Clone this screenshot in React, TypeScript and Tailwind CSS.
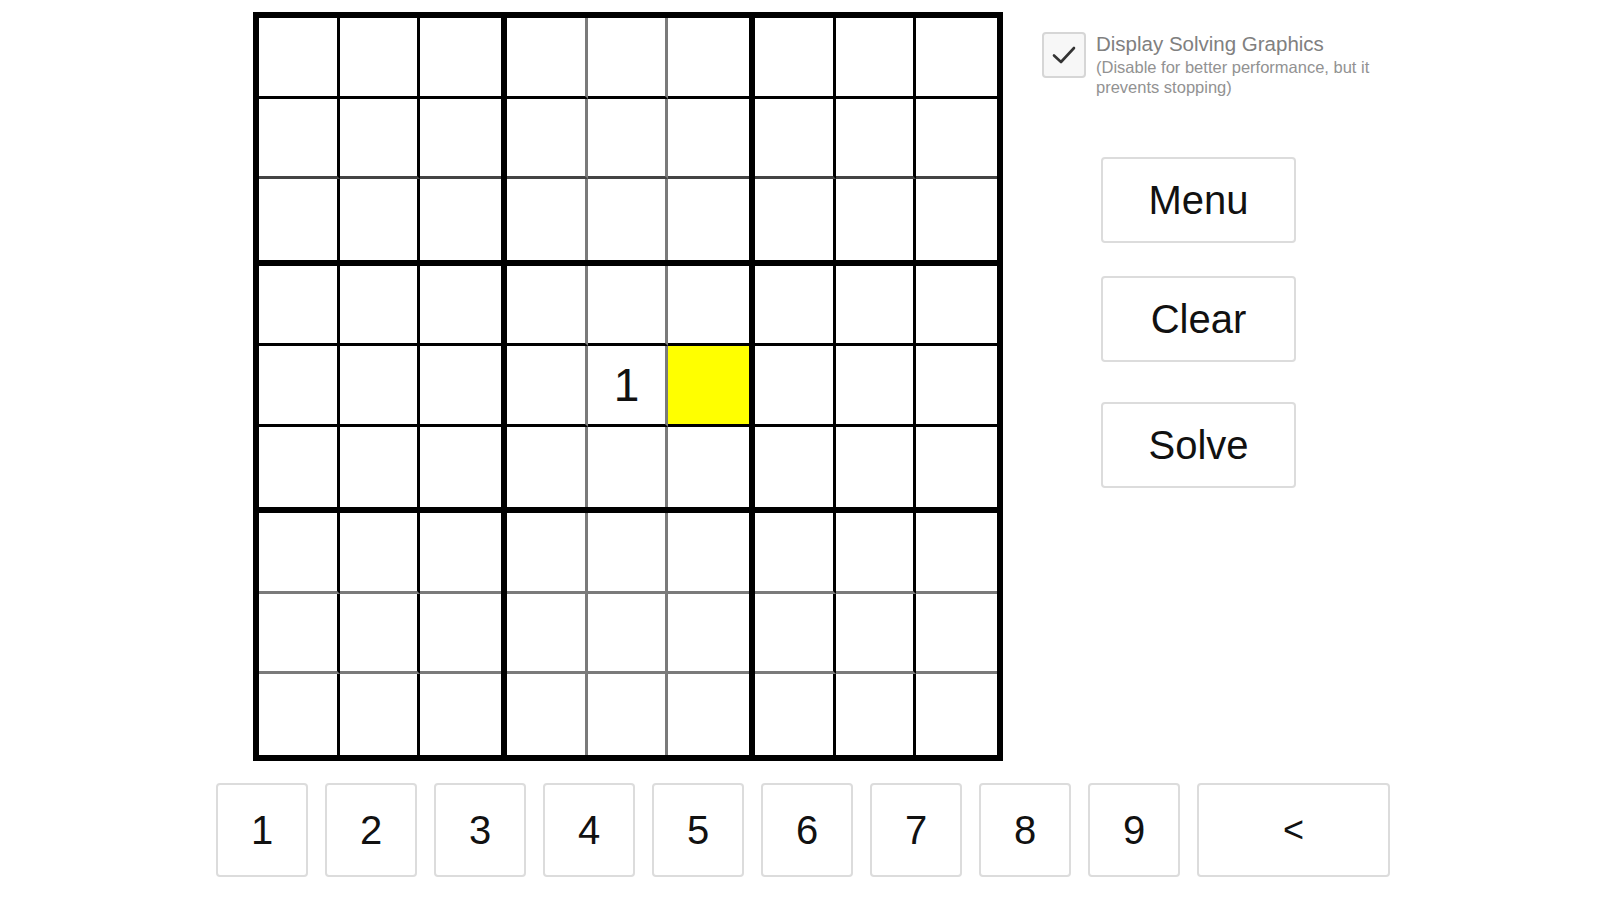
import React from "react";

const FONT = "font-['Liberation_Sans',Arial,sans-serif]";

// cell values: row, col -> text
const values: Record<string, string> = { "4-4": "1" };
const selected = "4-5";

function vLine(col: number) {
  if (col % 3 === 2) return "";
  if (col === 3 || col === 4) return "border-r-[3px] border-r-[#7a7a7a]";
  return "border-r-[3px] border-r-black";
}

function hLine(row: number) {
  if (row % 3 === 2) return "";
  if (row === 6 || row === 7) return "border-b-[3px] border-b-[#7a7a7a]";
  if (row === 1) return "border-b-[3px] border-b-[#444]";
  return "border-b-[3px] border-b-black";
}

function Cell({ row, col }: { row: number; col: number }) {
  const key = `${row}-${col}`;
  const isSelected = key === selected;
  return (
    <div
      className={`flex items-center justify-center text-[46px] leading-none text-[#111] ${
        isSelected ? "bg-[#ffff00]" : "bg-white"
      } ${vLine(col)} ${hLine(row)}`}
    >
      {values[key] ?? ""}
    </div>
  );
}

function Box({ boxRow, boxCol }: { boxRow: number; boxCol: number }) {
  const cells = [];
  for (let r = 0; r < 3; r++) {
    for (let c = 0; c < 3; c++) {
      const row = boxRow * 3 + r;
      const col = boxCol * 3 + c;
      cells.push(<Cell key={`${row}-${col}`} row={row} col={col} />);
    }
  }
  return <div className="grid grid-cols-3 grid-rows-3 bg-white">{cells}</div>;
}

function Board() {
  const boxes = [];
  for (let br = 0; br < 3; br++) {
    for (let bc = 0; bc < 3; bc++) {
      boxes.push(<Box key={`${br}-${bc}`} boxRow={br} boxCol={bc} />);
    }
  }
  return (
    <div className="grid h-[749px] w-[750px] shrink-0 grid-cols-3 grid-rows-3 gap-[6px] border-[6px] border-black bg-black">
      {boxes}
    </div>
  );
}

function SideButton({ label, className = "" }: { label: string; className?: string }) {
  return (
    <button
      className={`flex h-[86px] w-[195px] items-center justify-center rounded-[4px] border-2 border-[#dcdcdc] bg-white text-[40px] text-[#111] ${className}`}
    >
      {label}
    </button>
  );
}

function Checkbox() {
  return (
    <div className="flex items-start gap-[10px]">
      <div className="flex h-[46px] w-[44px] shrink-0 items-center justify-center rounded-[4px] border-2 border-[#d6d6d6] bg-[#f7f7f7]">
        <svg width="26" height="20" viewBox="0 0 26 20" fill="none">
          <path d="M3 10.5 L10 17 L23 3" stroke="#333" strokeWidth="2.6" strokeLinecap="round" strokeLinejoin="round" />
        </svg>
      </div>
      <div className="pt-[1px]">
        <p className="text-[20.5px] leading-[22px] text-[#808080]">Display Solving Graphics</p>
        <p className="mt-[2px] w-[290px] text-[16.5px] leading-[20px] text-[#929292]">
          (Disable for better performance, but it prevents stopping)
        </p>
      </div>
    </div>
  );
}

export default function App() {
  const digits = ["1", "2", "3", "4", "5", "6", "7", "8", "9"];
  return (
    <div className={`h-[900px] w-full bg-white ${FONT}`}>
      <div className="flex pl-[253px] pt-[12px]">
        <Board />
        <div className="ml-[39px] flex flex-col pt-[20px]">
          <Checkbox />
          <div className="ml-[59px] mt-[60px] flex flex-col">
            <SideButton label="Menu" />
            <SideButton label="Clear" className="mt-[33px]" />
            <SideButton label="Solve" className="mt-[40px]" />
          </div>
        </div>
      </div>
      <div className="mt-[22px] flex gap-[17px] pl-[216px]">
        {digits.map((d) => (
          <button
            key={d}
            className="flex h-[94px] w-[92px] items-center justify-center rounded-[4px] border-2 border-[#dcdcdc] bg-white text-[40px] text-[#111]"
          >
            {d}
          </button>
        ))}
        <button className="flex h-[94px] w-[193px] items-center justify-center rounded-[4px] border-2 border-[#dcdcdc] bg-white text-[36px] text-[#111]">
          &lt;
        </button>
      </div>
    </div>
  );
}
